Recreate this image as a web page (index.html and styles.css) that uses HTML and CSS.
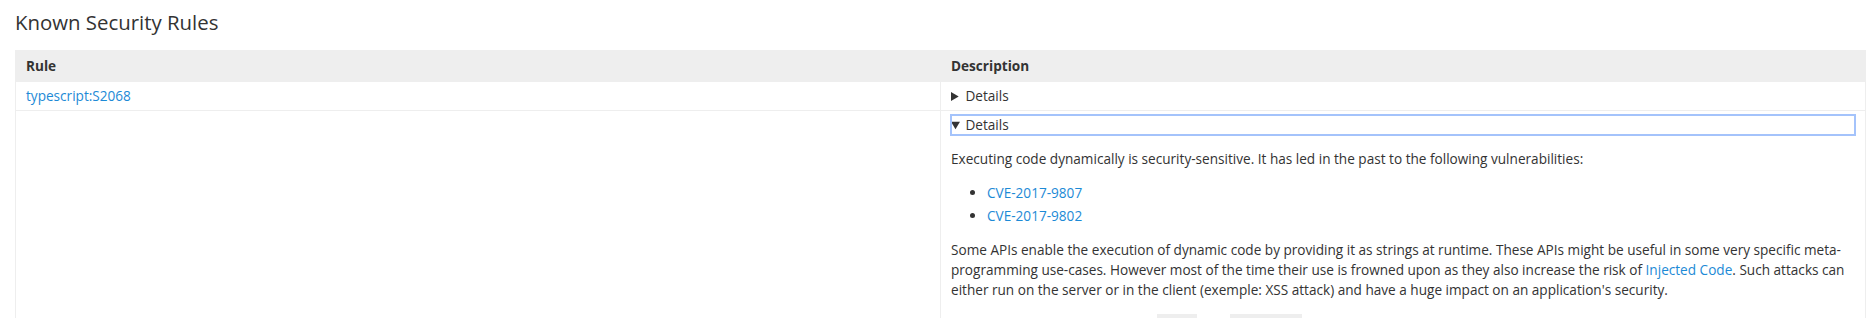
FILE: index.html
```html
<!DOCTYPE html>
<html lang="en">
<head>
  <meta charset="UTF-8">
  <title>Known Security Rules</title>
  <link rel="stylesheet" href="styles.css">
</head>
<body>
  <div class="page">
    <h1 class="page-title">Known Security Rules</h1>

    <table class="rules-table">
      <thead>
        <tr>
          <th>Rule</th>
          <th>Description</th>
        </tr>
      </thead>
      <tbody>
        <tr>
          <td><a href="#">typescript:S2068</a></td>
          <td>
            <details>
              <summary>Details</summary>
            </details>
          </td>
        </tr>
        <tr>
          <td></td>
          <td>
            <details open>
              <summary class="focused">Details</summary>
              <p>Executing code dynamically is security-sensitive. It has led in the past to the following vulnerabilities:</p>
              <ul>
                <li><a href="#">CVE-2017-9807</a></li>
                <li><a href="#">CVE-2017-9802</a></li>
              </ul>
              <p>Some APIs enable the execution of dynamic code by providing it as strings at runtime. These APIs might be useful in some very specific meta-programming use-cases. However most of the time their use is frowned upon as they also increase the risk of <a href="#">Injected Code</a>. Such attacks can either run on the server or in the client (exemple: XSS attack) and have a huge impact on an application's security.</p>
              <div class="code-row">
                <span class="code-chip short"></span>
                <span class="code-chip long"></span>
              </div>
            </details>
          </td>
        </tr>
      </tbody>
    </table>
  </div>
</body>
</html>
```

FILE: styles.css
```css
body {
  font-family: "Open Sans", "Noto Sans", sans-serif;
  font-size: 13.6px;
  line-height: 20px;
  margin: 0;
  color: #333;
  background: white;
}

.page {
  padding: 0 5px 0 15px;
}

.page-title {
  font-size: 20.4px;
  font-weight: 400;
  line-height: 28px;
  margin: 8px 0 14px 0;
  color: #333;
}

a {
  color: #1d8ad6;
  text-decoration: none;
}

.rules-table {
  width: 100%;
  border-collapse: collapse;
  table-layout: fixed;
}

.rules-table th,
.rules-table td {
  border: 1px solid #eee;
  text-align: left;
  vertical-align: top;
}

.rules-table th {
  background: #eee;
  font-weight: 700;
  padding: 5px 10px;
}

.rules-table td {
  padding: 4px 10px;
}

summary {
  cursor: pointer;
}

summary.focused {
  outline: 2px solid #a4c3fb;
  outline-offset: -1px;
}

details p {
  margin: 14px 0;
}

details ul {
  margin: 14px 0;
  padding-left: 36px;
}

details li {
  margin-bottom: 3px;
}

.code-row {
  display: flex;
  height: 20px;
  padding-left: 206px;
  gap: 33px;
}

.code-chip {
  display: block;
  background: #eee;
  height: 20px;
}

.code-chip.short {
  width: 40px;
}

.code-chip.long {
  width: 72px;
}
```
